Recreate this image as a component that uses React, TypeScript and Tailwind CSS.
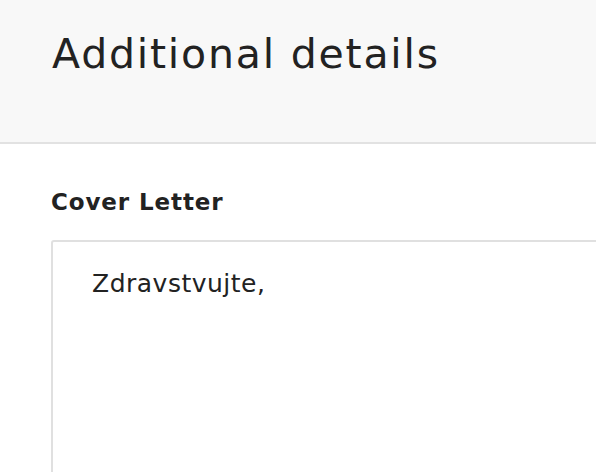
import React from 'react';

const font = { fontFamily: '"DejaVu Sans", "Noto Sans", sans-serif' };

export default function App() {
    return (
        <div className="w-[596px] h-[472px] overflow-hidden bg-white text-[#222222]" style={font}>
            <header className="h-[144px] bg-[#f8f8f8] border-b-2 border-[#e2e2e2] pl-[52px] pt-[26px]">
                <h1 className="text-[41px] leading-[56px] font-normal tracking-[1.8px]">Additional details</h1>
            </header>
            <section className="pl-[51px] pt-[42px]">
                <label htmlFor="cover" className="block text-[23px] leading-[32px] font-bold tracking-[0.9px]">
                    Cover Letter
                </label>
                <div className="mt-[22px] w-[620px] h-[260px] border-2 border-[#e0e0e0] rounded-[3px] px-[39px] pt-[26px] text-[25px] leading-[32px] tracking-[0.5px]">
                    Zdravstvujte,
                </div>
            </section>
        </div>
    );
}
